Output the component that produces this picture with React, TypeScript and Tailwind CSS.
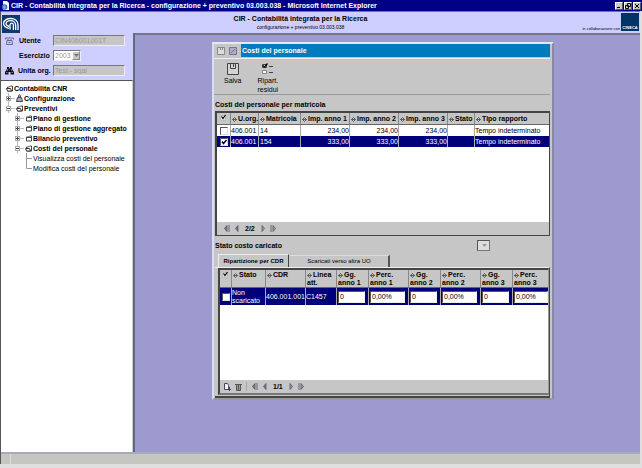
import React from "react";

type Column = { label: string; width: string };

const staffColumns: Column[] = [
  { label: "U.org.", width: "w-[28px]" },
  { label: "Matricola", width: "w-[42px]" },
  { label: "Imp. anno 1", width: "w-[49px]" },
  { label: "Imp. anno 2", width: "w-[49px]" },
  { label: "Imp. anno 3", width: "w-[49px]" },
  { label: "Stato", width: "w-[27px]" },
  { label: "Tipo rapporto", width: "" },
];

const staffRows = [
  { id: "14", amount: "234,00", selected: false },
  { id: "154", amount: "333,00", selected: true },
];

const shareColumns: Column[] = [
  { label: "Stato", width: "w-[34px]" },
  { label: "CDR", width: "w-[40px]" },
  { label: "Linea att.", width: "w-[31px]" },
  { label: "Gg. anno 1", width: "w-[32px]" },
  { label: "Perc. anno 1", width: "w-[40px]" },
  { label: "Gg. anno 2", width: "w-[32px]" },
  { label: "Perc. anno 2", width: "w-[40px]" },
  { label: "Gg. anno 3", width: "w-[32px]" },
  { label: "Perc. anno 3", width: "" },
];

const shareInputs = [
  { label: "Gg. anno 1", value: "0" },
  { label: "Perc. anno 1", value: "0,00%" },
  { label: "Gg. anno 2", value: "0" },
  { label: "Perc. anno 2", value: "0,00%" },
  { label: "Gg. anno 3", value: "0" },
  { label: "Perc. anno 3", value: "0,00%" },
];

function IeIcon() {
  return (
    <svg className="h-[10px] w-[9px] shrink-0" viewBox="0 0 9 10">
      <path d="M2 0h4l2 2v7H2z" fill="#f4f4ff" />
      <circle cx="3.5" cy="6" r="2.2" fill="#dfe8ff" stroke="#2b62c8" strokeWidth="1.2" />
      <path d="M2 6h4" stroke="#2b62c8" />
    </svg>
  );
}

function CnrLogo() {
  return (
    <svg className="h-[18px] w-[18px]" viewBox="0 0 18 18">
      <rect width="18" height="18" fill="#0b3a70" />
      <g fill="none" stroke="#fff" strokeWidth="1.3">
        <path d="M7 13.5C3.5 12.5 1.5 11 1.5 8.5 1.5 5.5 5 3.500 8.500 3.500c4.500 0 7.500 2.500 7.500 6.500v5" />
        <path d="M7.500 11.500C5.500 11 4 10 4 8.500 4 7 6 5.700 8.500 5.700c3 0 5.200 1.800 5.200 4.800V15" />
        <path d="M8 14.500V10c0-2.500 3.400-2.500 3.400 0v5" />
      </g>
    </svg>
  );
}

function PhoneIcon() {
  return (
    <svg className="h-[8px] w-[9px] shrink-0" viewBox="0 0 9 8" fill="none" stroke="#66668c">
      <path d="M.5 2.5V1h8v1.5M3 2v1.5M6 2v1.5M2 3.5h5l.5 4h-6z" />
      <path d="M3.5 5.5h2" />
    </svg>
  );
}

function BinocularsIcon() {
  return (
    <svg className="h-[8px] w-[9px] shrink-0" viewBox="0 0 9 8">
      <path d="M2 0h2v1.500h1V0h2v2l2 3v2.500H5.500V5h-2v2.500H0V5l2-3z" fill="#111" />
      <path d="M1 5.500h1.500M6.500 5.500H8M3 2l-1 2M6 2l1 2" stroke="#ccf" strokeWidth=".6" />
    </svg>
  );
}

function FolderIcon({ open = false }: { open?: boolean }) {
  return (
    <svg className="h-[7px] w-[7px] shrink-0" viewBox="0 0 7 7" fill="#fff" stroke="#444">
      <path d="M1.500 6v-4h2l1-1h2v5z" />
      <path d={open ? "M.5 3.500h4l1 2.500h-4z" : "M1.500 2.500h5"} stroke={open ? "#333" : "#7a3b30"} />
    </svg>
  );
}

function LockIcon() {
  return (
    <svg className="h-[8px] w-[7px] shrink-0" viewBox="0 0 7 8" fill="#aab" stroke="#445">
      <path d="M2.500 3.500v-2l1-1 1 1v2M1.500 3.500h4l1 4h-6z" />
    </svg>
  );
}

function Expander({ open = false }: { open?: boolean }) {
  return (
    <svg className="h-[10px] w-[9px] shrink-0" viewBox="0 0 9 10" fill="none">
      <path d="M2.500 0v10M5 5.500h4" stroke="#bbb" />
      <rect x=".5" y="3.500" width="4" height="4" fill="#fff" stroke="#aaa" />
      <path d={open ? "M1 5.500h3" : "M1 5.500h3M2.500 4v3"} stroke="#444" />
    </svg>
  );
}

function Branch({ last = false }: { last?: boolean }) {
  return (
    <svg className="h-[10px] w-[6px] shrink-0" viewBox="0 0 6 10" fill="none" stroke="#999">
      <path d={last ? "M.5 0v5.500H6" : "M.5 0v10M.5 5.500H6"} />
    </svg>
  );
}

function SaveIcon() {
  return (
    <svg className="h-[12px] w-[12px]" viewBox="0 0 12 12" fill="none" stroke="#444">
      <path d="M.5 .5h11v11H.5z" fill="#d4d4d4" />
      <path d="M3.500 .5v5h5v-5M6.500 1v3" />
    </svg>
  );
}

function ChecklistIcon() {
  return (
    <svg className="h-[12px] w-[12px]" viewBox="0 0 12 12" fill="none" stroke="#444">
      <path d="M.5 1.500h4v3h-4z" fill="#fff" />
      <path d="M1 2.500l1.500 1.500L5.500 .5" stroke="#000" strokeWidth="1.300" />
      <path d="M.5 7.500h4v3h-4z" fill="#fff" stroke="#888" />
      <path d="M7 3.500h4M7 9.500h4" />
    </svg>
  );
}

function CheckGlyph() {
  return (
    <svg className="mx-auto h-[7px] w-[7px]" viewBox="0 0 7 7" fill="none">
      <path d="M.5 1.500h5v5h-5z" fill="#ddd" stroke="#bbb" />
      <path d="M1.500 2.500l1.500 2L5.500 1" stroke="#000" strokeWidth="1.200" />
    </svg>
  );
}

function SortIcon() {
  return (
    <svg className="mr-px inline-block h-[5px] w-[5px]" viewBox="0 0 5 5" fill="none" stroke="#444">
      <path d="M2.500 .5l2 2-2 2-2-2zM.5 2.500h4" strokeWidth=".8" />
    </svg>
  );
}

function Arrow({ dir, end = false }: { dir: "left" | "right"; end?: boolean }) {
  return (
    <svg className={dir === "left" ? "h-[7px] w-[7px]" : "h-[7px] w-[7px] -scale-x-100"} viewBox="0 0 7 7">
      <path d="M4 .5v6L1.500 3.500z" fill={dir === "left" ? "#778" : "#99a"} stroke="#556" strokeWidth=".8" />
      {end && <path d="M6 0v7" stroke="#667" />}
    </svg>
  );
}

function Pager({ text }: { text: string }) {
  return (
    <div className="flex items-center gap-[4px]">
      <button type="button" aria-label="Prima pagina"><Arrow dir="left" end /></button>
      <button type="button" aria-label="Pagina precedente"><Arrow dir="left" /></button>
      <span className="font-bold">{text}</span>
      <button type="button" aria-label="Pagina successiva"><Arrow dir="right" /></button>
      <button type="button" aria-label="Ultima pagina"><Arrow dir="right" end /></button>
    </div>
  );
}

function RowCheck({ label, checked = false }: { label: string; checked?: boolean }) {
  return (
    <span className="relative mx-auto block h-[8px] w-[8px]">
      <input
        type="checkbox"
        aria-label={label}
        defaultChecked={checked}
        className="peer block h-[8px] w-[8px] appearance-none border border-t-[#555] border-r-[#ddd] border-b-[#ddd] border-l-[#555] bg-white"
      />
      <svg className="pointer-events-none absolute inset-0 hidden h-[8px] w-[8px] peer-checked:block" viewBox="0 0 8 8" fill="none" stroke="#000">
        <path d="M2 3.500l1.500 2L6.500 2" strokeWidth="1.500" />
      </svg>
    </span>
  );
}

function HeadCells({ columns }: { columns: Column[] }) {
  return (
    <tr className="bg-[#c6c6c6] text-left align-top">
      <th className="border-r border-b border-r-[#888] border-b-[#666] pt-px"><CheckGlyph /></th>
      {columns.map((c) => (
        <th key={c.label} className="border-r border-b border-r-[#888] border-b-[#666] pt-px pl-px font-bold last:border-r-0">
          <SortIcon />
          {c.label}
        </th>
      ))}
    </tr>
  );
}

function TreeItem({ children }: { children: React.ReactNode }) {
  return <li className="flex h-[10px] items-center gap-px whitespace-nowrap">{children}</li>;
}

function WindowButton({ label, d }: { label: string; d: string }) {
  return (
    <button type="button" aria-label={label} className="h-[8px] w-[8px] border border-t-white border-r-[#555] border-b-[#555] border-l-white bg-[#c8c8c8]">
      <svg className="h-[6px] w-[6px]" viewBox="0 0 6 6" fill="none" stroke="#000">
        <path d={d} />
      </svg>
    </button>
  );
}

export default function App() {
  const field = "h-[11px] border border-t-[#777] border-r-[#eee] border-b-[#eee] border-l-[#777] px-px leading-[9px] font-normal text-[#999]";
  return (
    <div className="flex min-h-screen flex-col bg-[#dedede] pb-[4px] font-['Liberation_Sans',Arial,sans-serif] text-[7px] leading-[9px] text-black">
      <div className="flex h-[11px] items-center gap-px bg-[#000084] px-px font-bold text-white">
        <IeIcon />
        <h1 className="flex-1">
          CIR - Contabilità integrata per la Ricerca - configurazione + preventivo 03.003.038 - Microsoft Internet Explorer
        </h1>
        <div className="flex gap-px">
          <WindowButton label="Riduci a icona" d="M1 4.500h3" />
          <WindowButton label="Ripristina" d="M2.500 .5h3v3h-3zM.5 2.500h3v3h-3z" />
          <WindowButton label="Chiudi" d="M1 1l4 4M5 1L1 5" />
        </div>
      </div>

      <div className="flex flex-1 flex-col border-r-2 border-l border-r-[#dedede] border-l-[#555]">
        <header className="grid h-[22px] grid-cols-[1fr_auto_1fr] border-t border-[#777] bg-[#ceceff] px-px">
          <div className="flex items-center pt-[2px]"><CnrLogo /></div>
          <div className="pt-[2px] pr-[40px] text-center">
            <div className="font-bold">CIR - Contabilità integrata per la Ricerca</div>
            <div className="text-[5px] leading-[8px]">configurazione + preventivo 03.003.038</div>
          </div>
          <div className="flex items-end justify-end gap-px">
            <span className="text-[4px] leading-[8px]">in collaborazione con</span>
            <span className="mb-[2px] flex h-[18px] w-[18px] items-end justify-center bg-[#003366] text-[4px] leading-[6px] font-bold text-white">CINECA</span>
          </div>
        </header>

        <div className="flex flex-1">
          <aside className="flex w-[134px] shrink-0 flex-col border-r-2 border-[#666680] bg-[#ceceff]">
            <form className="grid h-[47px] grid-cols-[45px_1fr] items-center gap-x-[3px] gap-y-[4px] pt-[2px] pr-[8px] pb-[4px] pl-[4px] font-bold">
              <label htmlFor="utente" className="flex items-center gap-[5px]"><PhoneIcon />Utente</label>
              <input id="utente" disabled defaultValue="CIN406001001T" className={`${field} w-full bg-[#c6c6c6]`} />
              <label htmlFor="esercizio" className="pl-[14px]">Esercizio</label>
              <div className="relative w-[28px]">
                <select id="esercizio" className={`${field} block w-full appearance-none bg-white`}>
                  <option>2003</option>
                </select>
                <span className="pointer-events-none absolute top-px right-px flex h-[9px] w-[8px] items-center justify-center border border-[#888] border-t-white border-l-white bg-[#c6c6c6]">
                  <svg className="h-[3px] w-[5px]" viewBox="0 0 5 3"><path d="M0 0h5L2.500 3z" fill="#777" /></svg>
                </span>
              </div>
              <label htmlFor="unita" className="flex items-center gap-[4px] whitespace-nowrap"><BinocularsIcon />Unita org.</label>
              <input id="unita" disabled defaultValue="Test - sgai" className={`${field} w-full bg-[#c6c6c6]`} />
            </form>
            <nav className="flex-1 border-t border-r border-t-[#555] border-r-[#ccc] bg-white pt-[2px] pl-[5px]">
              <ul className="font-bold">
                <TreeItem><FolderIcon open />Contabilita CNR</TreeItem>
                <TreeItem><Expander /><LockIcon />Configurazione</TreeItem>
                <TreeItem><Expander open /><FolderIcon open />Preventivi</TreeItem>
                <li>
                  <ul className="pl-[9px]">
                    <TreeItem><Expander /><FolderIcon />Piano di gestione</TreeItem>
                    <TreeItem><Expander /><FolderIcon />Piano di gestione aggregato</TreeItem>
                    <TreeItem><Expander /><FolderIcon />Bilancio preventivo</TreeItem>
                    <TreeItem><Expander open /><FolderIcon open />Costi del personale</TreeItem>
                    <li>
                      <ul className="pl-[11px] font-normal">
                        <TreeItem><Branch /><a href="#visualizza">Visualizza costi del personale</a></TreeItem>
                        <TreeItem><Branch last /><a href="#modifica">Modifica costi del personale</a></TreeItem>
                      </ul>
                    </li>
                  </ul>
                </li>
              </ul>
            </nav>
          </aside>

          <main className="flex-1 border-t-2 border-[#777788] bg-[#9c9ace] pt-[7px] pr-[86px] pb-[48px] pl-[77px]">
            <section className="border-2 border-t-[#e4e8f0] border-r-[#8888a8] border-b-[#999] border-l-[#dde] bg-[#c6c6c6] pr-[2px]">
              <div className="flex h-[13px] items-center gap-[4px] pl-[3px]">
                <svg className="h-[8px] w-[8px]" viewBox="0 0 8 8" fill="#ddd" stroke="#888"><path d="M.5 .5h7v7h-7zM3.500 1v2M5.500 1v2" /></svg>
                <svg className="h-[8px] w-[8px]" viewBox="0 0 8 8" fill="#aac" stroke="#778"><path d="M.5 .5h7v7h-7zM2 6l4-4" /></svg>
                <h2 className="flex-1 self-stretch bg-[#007bbd] px-px leading-[13px] font-bold text-white">Costi del personale</h2>
              </div>
              <div className="mt-px flex h-[37px] gap-[16px] border-t border-b border-t-[#eee] border-b-[#999] pt-[4px] pl-[10px]">
                <button type="button" className="flex flex-col items-center gap-px"><SaveIcon />Salva</button>
                <button type="button" className="flex flex-col items-center gap-px"><ChecklistIcon /><span>Ripart.<br />residui</span></button>
              </div>
              <div className="pl-px">
                <h3 className="pt-[5px] pb-[2px] font-bold">Costi del personale per matricola</h3>
                <div className="flex flex-col border-t-2 border-r border-b border-l-2 border-[#444]">
                  <div className="h-[109px] bg-white">
                    <table className="w-full table-fixed border-separate border-spacing-0">
                      <colgroup>
                        <col className="w-[14px]" />
                        {staffColumns.map((c) => <col key={c.label} className={c.width} />)}
                      </colgroup>
                      <thead className="h-[12px] whitespace-nowrap"><HeadCells columns={staffColumns} /></thead>
                      <tbody>
                        {staffRows.map((r) => (
                          <tr key={r.id} className={r.selected ? "h-[11px] bg-[#00007b] text-white" : "h-[11px]"}>
                            <td className="border-r border-[#aaa]"><RowCheck label={`Seleziona ${r.id}`} checked={r.selected} /></td>
                            <td className="border-r border-[#aaa]">406.001</td>
                            <td className="border-r border-[#aaa] pl-px">{r.id}</td>
                            <td className="border-r border-[#aaa] text-right">{r.amount}</td>
                            <td className="border-r border-[#aaa] text-right">{r.amount}</td>
                            <td className="border-r border-[#aaa] text-right">{r.amount}</td>
                            <td className="border-r border-[#aaa]" />
                            <td>Tempo indeterminato</td>
                          </tr>
                        ))}
                      </tbody>
                    </table>
                  </div>
                  <div className="flex h-[13px] items-center pl-[6px]"><Pager text="2/2" /></div>
                </div>

                <div className="flex h-[18px] items-center font-bold">
                  <label htmlFor="stato" className="w-[262px]">Stato costo caricato</label>
                  <div className="relative w-[13px]">
                    <select id="stato" className="block h-[11px] w-full appearance-none border border-[#777] border-t-[#555] border-l-[#555] bg-[#ddd]"><option> </option></select>
                    <svg className="pointer-events-none absolute top-[4px] right-[3px] h-[3px] w-[5px]" viewBox="0 0 5 3"><path d="M0 0h5L2.500 3z" fill="#999" /></svg>
                  </div>
                </div>

                <div role="tablist" className="flex h-[13px] items-end gap-px pl-[3px] text-[6px]">
                  <button type="button" role="tab" aria-selected="true" className="h-[13px] w-[71px] border border-b-0 border-[#eee] border-r-[#444] font-bold">Ripartizione per CDR</button>
                  <button type="button" role="tab" aria-selected="false" className="h-[12px] w-[100px] border-t border-r-2 border-t-[#ddd] border-r-[#555]">Scaricati verso altra UO</button>
                </div>
                <div className="border-t border-r border-b-2 border-t-[#eee] border-r-[#444] border-b-[#444] pb-px pl-[3px]">
                  <div className="border-t-2 border-r border-b-2 border-l-2 border-t-[#444] border-r-[#999] border-b-[#777] border-l-[#444]">
                    <div className="h-[110px] bg-white">
                      <table className="w-full table-fixed border-separate border-spacing-0">
                        <colgroup>
                          <col className="w-[12px]" />
                          {shareColumns.map((c) => <col key={c.label} className={c.width} />)}
                        </colgroup>
                        <thead className="h-[18px] leading-[8px]"><HeadCells columns={shareColumns} /></thead>
                        <tbody>
                          <tr className="h-[17px] bg-[#00007b] leading-[8px] text-white">
                            <td className="border-r border-[#aaa]"><RowCheck label="Seleziona riga" /></td>
                            <td className="border-r border-[#aaa]">Non scaricato</td>
                            <td className="border-r border-[#aaa]">406.001.001</td>
                            <td className="border-r border-[#aaa]">C1457</td>
                            {shareInputs.map((f) => (
                              <td key={f.label} className="border-r border-[#aaa] pr-[3px] pl-px last:border-r-0 last:pr-0">
                                <input aria-label={f.label} defaultValue={f.value} className="block h-[12px] w-full border border-[#eee] border-t-[#555] border-l-[#555] bg-white pl-px text-black" />
                              </td>
                            ))}
                          </tr>
                        </tbody>
                      </table>
                    </div>
                    <div className="flex h-[13px] items-center gap-[4px] pl-[3px]">
                      <button type="button" aria-label="Nuovo">
                        <svg className="h-[8px] w-[8px]" viewBox="0 0 8 8" fill="#fff" stroke="#446"><path d="M1.500 .5h3l1 2v4h-4z" /><path d="M6.500 4v4M4.500 6.500H8" /></svg>
                      </button>
                      <button type="button" aria-label="Elimina">
                        <svg className="h-[8px] w-[7px]" viewBox="0 0 7 8" fill="#999" stroke="#555"><path d="M0 1.500h7M1.500 2v5.500h4V2M3.500 2v5" /></svg>
                      </button>
                      <div className="border-l border-[#aaa] pl-[4px]"><Pager text="1/1" /></div>
                    </div>
                  </div>
                </div>
              </div>
            </section>
          </main>
        </div>

        <footer className="flex h-[12px] border-t-2 border-[#aaaabd] bg-[#c6c6c0]">
          <div className="w-[10px] border-r border-[#ddd]" />
        </footer>
      </div>
    </div>
  );
}
